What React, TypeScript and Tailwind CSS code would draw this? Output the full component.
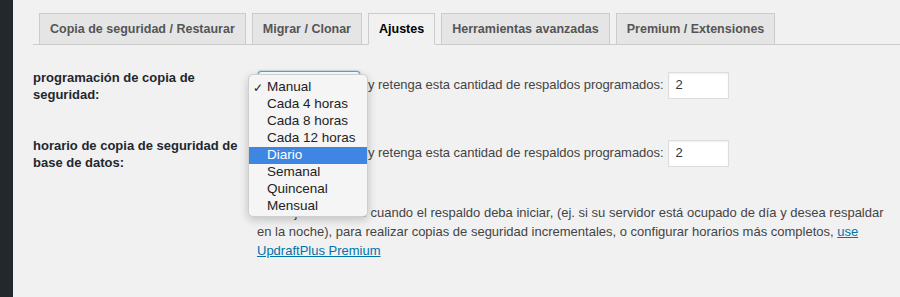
import React from "react";

const tabs = [
  { label: "Copia de seguridad / Restaurar", active: false },
  { label: "Migrar / Clonar", active: false },
  { label: "Ajustes", active: true },
  { label: "Herramientas avanzadas", active: false },
  { label: "Premium / Extensiones", active: false },
];

const options = ["Manual", "Cada 4 horas", "Cada 8 horas", "Cada 12 horas", "Diario", "Semanal", "Quincenal", "Mensual"];

function Controls({ focused }: { focused?: boolean }) {
  return (
    <div className="flex items-center h-[28px] mt-[2px]">
      <div
        className={
          "w-[102px] h-[28px] rounded-[3px] bg-white border " +
          (focused ? "border-[#5b9dd9] shadow-[0_0_2px_rgba(30,140,190,0.8)]" : "border-[#ddd]")
        }
      />
      <span className="ml-[8px] text-[13px] text-[#444] tracking-[-0.03px]">y retenga esta cantidad de respaldos programados:</span>
      <div className="ml-[4px] w-[61px] h-[27px] bg-white border border-[#ddd] shadow-[inset_0_1px_2px_rgba(0,0,0,0.07)] flex items-center pl-[7px] text-[13px] text-[#333]">
        2
      </div>
    </div>
  );
}

export default function App() {
  return (
    <div className="flex min-h-[297px] bg-[#f1f1f1] font-['Liberation_Sans',Arial,sans-serif] overflow-hidden">
      <div className="w-[13px] shrink-0 bg-[#23282d]" />
      <div className="flex-1 relative pl-[20px] pt-[13px]">
        <div className="flex gap-[6px] pl-[6px] border-b border-[#ccc] h-[32px]">
          {tabs.map((t) => (
            <div
              key={t.label}
              className={
                "h-[32px] px-[10px] pt-[1px] flex items-center text-[12.5px] font-semibold border border-[#ccc] " +
                (t.active ? "bg-[#f1f1f1] text-black border-b-[#f1f1f1]" : "bg-[#e5e5e5] text-[#555]")
              }
            >
              {t.label}
            </div>
          ))}
        </div>

        <div className="mt-[24px] flex">
          <div className="w-[225px] shrink-0 text-[13px] font-bold leading-[17px] text-[#23282d] pr-[20px]">
            programación de copia de seguridad:
          </div>
          <Controls focused />
        </div>

        <div className="mt-[34px] flex">
          <div className="w-[225px] shrink-0 text-[13px] font-bold leading-[17px] text-[#23282d] pr-[20px]">
            horario de copia de seguridad de base de datos:
          </div>
          <Controls />
        </div>

        <p className="mt-[32px] ml-[224px] mr-[12px] text-[13px] leading-[19px] text-[#444]">
          Para fijar el horario cuando el respaldo deba iniciar, (ej. si su servidor está ocupado de día y desea respaldar en la noche), para realizar copias de seguridad incrementales, o configurar horarios más completos,{" "}
          <a className="text-[#0073aa] underline">use UpdraftPlus Premium</a>
        </p>

        <div className="absolute left-[235px] top-[74px] w-[120px] h-[143px] rounded-[5px] bg-[#f5f5f5] border border-[#cfcfcf] shadow-[0_3px_10px_rgba(0,0,0,0.2)] pt-[4px]">
          {options.map((o) => (
            <div
              key={o}
              className={
                "relative h-[17px] flex items-center pl-[18px] text-[13.5px] " +
                (o === "Diario" ? "bg-[#3f86e3] text-white" : "text-[#222]")
              }
            >
              {o === "Manual" && <span className="absolute left-[4px] text-[12px]">✓</span>}
              {o}
            </div>
          ))}
        </div>
      </div>
    </div>
  );
}
